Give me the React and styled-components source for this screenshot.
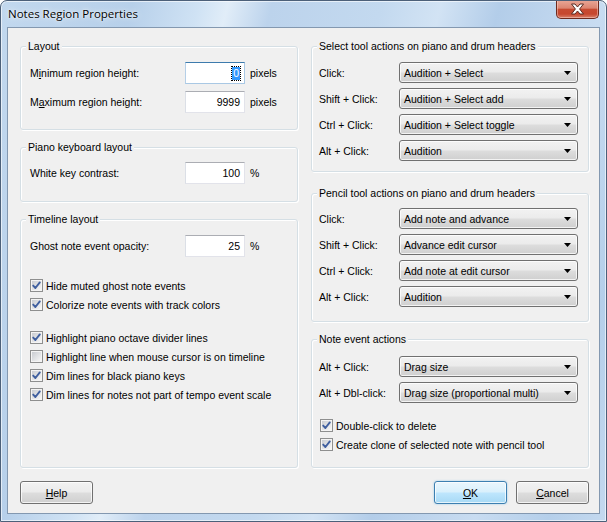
import React from 'react';
import styled, { createGlobalStyle } from 'styled-components';

const GlobalStyle = createGlobalStyle`
  html, body { margin: 0; padding: 0; background: #ffffff; }
  body {
    font-family: "Liberation Sans", Arial, sans-serif;
    font-size: 10.5px;
    color: #000;
  }
  * { box-sizing: border-box; }
`;

const Window = styled.div`
  width: 607px;
  height: 522px;
  display: flex;
  flex-direction: column;
  border: 1px solid #4c6079;
  border-radius: 7px 7px 0 0;
  overflow: hidden;
  background:
    linear-gradient(104deg,
      #c2d8ee 0%, #b7d0ea 18%, #cfe2f4 27%, #e1edf8 31%, #bcd3ec 37%,
      #c3d9ef 52%, #d2e3f4 60%, #b3cde9 68%, #c8dcf1 82%, #b5cfea 92%, #c4d9ef 100%);
  box-shadow: inset 0 0 0 1px rgba(255, 255, 255, 0.6);
`;

const TitleBar = styled.div`
  height: 26px;
  flex: none;
  display: flex;
  align-items: flex-start;
  justify-content: space-between;
  padding-left: 7px;
`;

const TitleText = styled.div`
  font-family: "Open Sans", "Noto Sans", sans-serif;
  font-size: 11.5px;
  line-height: 16px;
  margin-top: 5px;
  color: #000;
  text-shadow: 0 0 6px rgba(255, 255, 255, 0.9), 0 0 2px rgba(255, 255, 255, 0.9);
`;

const CloseButton = styled.div`
  width: 43px;
  height: 19px;
  margin-top: -1px;
  margin-right: 7px;
  display: flex;
  align-items: center;
  justify-content: center;
  border: 1px solid #6e2a1e;
  border-top: none;
  border-radius: 0 0 5px 5px;
  background: linear-gradient(#eaa898 0%, #dc8571 45%, #c74a31 52%, #c6472e 78%, #d9816b 100%);
  box-shadow: inset 0 0 0 1px rgba(255, 220, 210, 0.45);
`;

const Client = styled.div`
  flex: 1;
  margin: 0 6px 7px 6px;
  border: 1px solid #8398b0;
  background: #f0f0f0;
  display: flex;
  flex-direction: column;
  padding: 18px 10px 9px 12px;
`;

const Columns = styled.div`
  display: grid;
  grid-template-columns: 278px 278px;
  column-gap: 13px;
`;

const Column = styled.div`
  display: flex;
  flex-direction: column;
`;

const Group = styled.section`
  position: relative;
  height: ${(p) => p.$h}px;
  margin-top: ${(p) => p.$mt || 0}px;
  padding: ${(p) => p.$pt}px 10px 0 ${(p) => p.$pl}px;
  border: 1px solid #d5dfe5;
  border-radius: 3px;
  box-shadow: inset 1px 1px 0 #ffffff, 1px 1px 0 #ffffff;
`;

const Legend = styled.h3`
  position: absolute;
  top: -7px;
  left: 5px;
  margin: 0;
  padding: 0 2px;
  font: inherit;
  line-height: 13px;
  background: #f0f0f0;
`;

const Stack = styled.div`
  display: flex;
  flex-direction: column;
  gap: ${(p) => p.$gap}px;
  margin-top: ${(p) => p.$mt || 0}px;
`;

const FieldRow = styled.div`
  display: grid;
  grid-template-columns: 155px 60px auto;
  align-items: center;
  height: 22px;
`;

const Unit = styled.span`
  padding-left: 5px;
`;

const TextBox = styled.div`
  height: 22px;
  display: flex;
  align-items: center;
  justify-content: flex-end;
  padding-right: 4px;
  background: #fff;
  border: 1px solid ${(p) => (p.$focused ? '#a9c8e4' : '#e2e3ea')};
  border-top-color: ${(p) => (p.$focused ? '#3d7bad' : '#abadb3')};
  border-left-color: ${(p) => (p.$focused ? '#b5cfe7' : '#dbdfe6')};
`;

const Selection = styled.span`
  background: #3399ff;
  color: #fff;
  padding: 0 1px;
  line-height: 13px;
  outline: 1px dotted #000;
`;

const SelectRow = styled.div`
  display: grid;
  grid-template-columns: 80px 179px;
  align-items: center;
  height: 21px;
`;

const Dropdown = styled.div`
  height: 21px;
  display: flex;
  align-items: center;
  justify-content: space-between;
  padding: 0 6px 0 4px;
  border: 1px solid #707070;
  border-radius: 3px;
  background: linear-gradient(#f2f2f2 0%, #ebebeb 48%, #dddddd 52%, #cfcfcf 100%);
  box-shadow: inset 0 0 0 1px rgba(255, 255, 255, 0.75);
`;

const CheckRow = styled.label`
  display: flex;
  align-items: center;
  gap: 3px;
  height: 19px;
  margin-left: ${(p) => p.$ml || 0}px;
`;

const Footer = styled.div`
  margin-top: auto;
  display: flex;
  justify-content: space-between;
`;

const ButtonGroup = styled.div`
  display: flex;
  gap: 9px;
`;

const Button = styled.div`
  width: 73px;
  height: 23px;
  display: flex;
  align-items: center;
  justify-content: center;
  border: 1px solid ${(p) => (p.$default ? '#3c7fb1' : '#707070')};
  border-radius: 3px;
  background: ${(p) =>
    p.$default
      ? 'linear-gradient(#eaf6fd 0%, #d9f0fc 48%, #bee6fd 52%, #a7d9f5 100%)'
      : 'linear-gradient(#f2f2f2 0%, #ebebeb 48%, #dddddd 52%, #cfcfcf 100%)'};
  box-shadow: ${(p) =>
    p.$default
      ? 'inset 0 0 0 1px rgba(255,255,255,0.7), 0 0 2px rgba(80,170,230,0.6)'
      : 'inset 0 0 0 1px rgba(255,255,255,0.75)'};
`;

const Mn = styled.u`
  text-decoration: underline;
  text-underline-offset: 1px;
`;

function CloseGlyph() {
  return (
    <svg width="15" height="12" viewBox="0 0 15 12">
      <path
        d="M1.5 1 L5 1 L7.5 4 L10 1 L13.5 1 L9.6 6 L13.5 11 L10 11 L7.5 8 L5 11 L1.5 11 L5.4 6 Z"
        fill="#ffffff"
        stroke="#5a2b22"
        strokeWidth="1"
        strokeLinejoin="round"
      />
    </svg>
  );
}

function Arrow() {
  return (
    <svg width="7" height="4" viewBox="0 0 7 4">
      <path d="M0 0 H7 L3.5 4 Z" fill="#000" />
    </svg>
  );
}

function CheckBox({ checked }) {
  return (
    <svg width="13" height="13" viewBox="0 0 13 13" style={{ flex: 'none' }}>
      <defs>
        <linearGradient id="cbg" x1="0" y1="0" x2="1" y2="1">
          <stop offset="0" stopColor="#c9ccd1" />
          <stop offset="1" stopColor="#f6f6f6" />
        </linearGradient>
      </defs>
      <rect x="0.5" y="0.5" width="12" height="12" fill="#f4f4f4" stroke="#8e8f8f" />
      <rect x="2" y="2" width="9" height="9" fill="url(#cbg)" />
      {checked && (
        <path
          d="M3.2 6.6 L5.4 9 L9.8 3.4"
          fill="none"
          stroke="#3f5f9f"
          strokeWidth="1.9"
          strokeLinecap="round"
          strokeLinejoin="round"
        />
      )}
    </svg>
  );
}

function Check({ checked, children, ml }) {
  return (
    <CheckRow $ml={ml}>
      <CheckBox checked={checked} />
      <span>{children}</span>
    </CheckRow>
  );
}

function Select({ label, value }) {
  return (
    <SelectRow>
      <span>{label}</span>
      <Dropdown>
        <span>{value}</span>
        <Arrow />
      </Dropdown>
    </SelectRow>
  );
}

export default function App() {
  return (
    <>
      <GlobalStyle />
      <Window>
        <TitleBar>
          <TitleText>Notes Region Properties</TitleText>
          <CloseButton>
            <CloseGlyph />
          </CloseButton>
        </TitleBar>
        <Client>
          <Columns>
            <Column>
              <Group $h={84} $pt={15} $pl={9}>
                <Legend>Layout</Legend>
                <Stack $gap={7}>
                  <FieldRow>
                    <span>
                      M<Mn>i</Mn>nimum region height:
                    </span>
                    <TextBox $focused>
                      <Selection>0</Selection>
                    </TextBox>
                    <Unit>pixels</Unit>
                  </FieldRow>
                  <FieldRow>
                    <span>
                      M<Mn>a</Mn>ximum region height:
                    </span>
                    <TextBox>9999</TextBox>
                    <Unit>pixels</Unit>
                  </FieldRow>
                </Stack>
              </Group>
              <Group $h={55} $mt={17} $pt={14} $pl={9}>
                <Legend>Piano keyboard layout</Legend>
                <FieldRow>
                  <span>White key contrast:</span>
                  <TextBox>100</TextBox>
                  <Unit>%</Unit>
                </FieldRow>
              </Group>
              <Group $h={249} $mt={17} $pt={15} $pl={9}>
                <Legend>Timeline layout</Legend>
                <FieldRow>
                  <span>Ghost note event opacity:</span>
                  <TextBox>25</TextBox>
                  <Unit>%</Unit>
                </FieldRow>
                <Stack $gap={0} $mt={19}>
                  <Check checked>Hide muted ghost note events</Check>
                  <Check checked>Colorize note events with track colors</Check>
                </Stack>
                <Stack $gap={0} $mt={14}>
                  <Check checked>Highlight piano octave divider lines</Check>
                  <Check>Highlight line when mouse cursor is on timeline</Check>
                  <Check checked>Dim lines for black piano keys</Check>
                  <Check checked>Dim lines for notes not part of tempo event scale</Check>
                </Stack>
              </Group>
            </Column>
            <Column>
              <Group $h={126} $pt={15} $pl={7}>
                <Legend>Select tool actions on piano and drum headers</Legend>
                <Stack $gap={5}>
                  <Select label="Click:" value="Audition + Select" />
                  <Select label="Shift + Click:" value="Audition + Select add" />
                  <Select label="Ctrl + Click:" value="Audition + Select toggle" />
                  <Select label="Alt + Click:" value="Audition" />
                </Stack>
              </Group>
              <Group $h={129} $mt={21} $pt={14} $pl={7}>
                <Legend>Pencil tool actions on piano and drum headers</Legend>
                <Stack $gap={5}>
                  <Select label="Click:" value="Add note and advance" />
                  <Select label="Shift + Click:" value="Advance edit cursor" />
                  <Select label="Ctrl + Click:" value="Add note at edit cursor" />
                  <Select label="Alt + Click:" value="Audition" />
                </Stack>
              </Group>
              <Group $h={129} $mt={17} $pt={16} $pl={7}>
                <Legend>Note event actions</Legend>
                <Stack $gap={5}>
                  <Select label="Alt + Click:" value="Drag size" />
                  <Select label="Alt + Dbl-click:" value="Drag size (proportional multi)" />
                </Stack>
                <Stack $gap={0} $mt={13}>
                  <Check checked ml={1}>Double-click to delete</Check>
                  <Check checked ml={1}>Create clone of selected note with pencil tool</Check>
                </Stack>
              </Group>
            </Column>
          </Columns>
          <Footer>
            <Button>
              <span>
                <Mn>H</Mn>elp
              </span>
            </Button>
            <ButtonGroup>
              <Button $default>
                <span>
                  <Mn>O</Mn>K
                </span>
              </Button>
              <Button>
                <span>
                  <Mn>C</Mn>ancel
                </span>
              </Button>
            </ButtonGroup>
          </Footer>
        </Client>
      </Window>
    </>
  );
}
